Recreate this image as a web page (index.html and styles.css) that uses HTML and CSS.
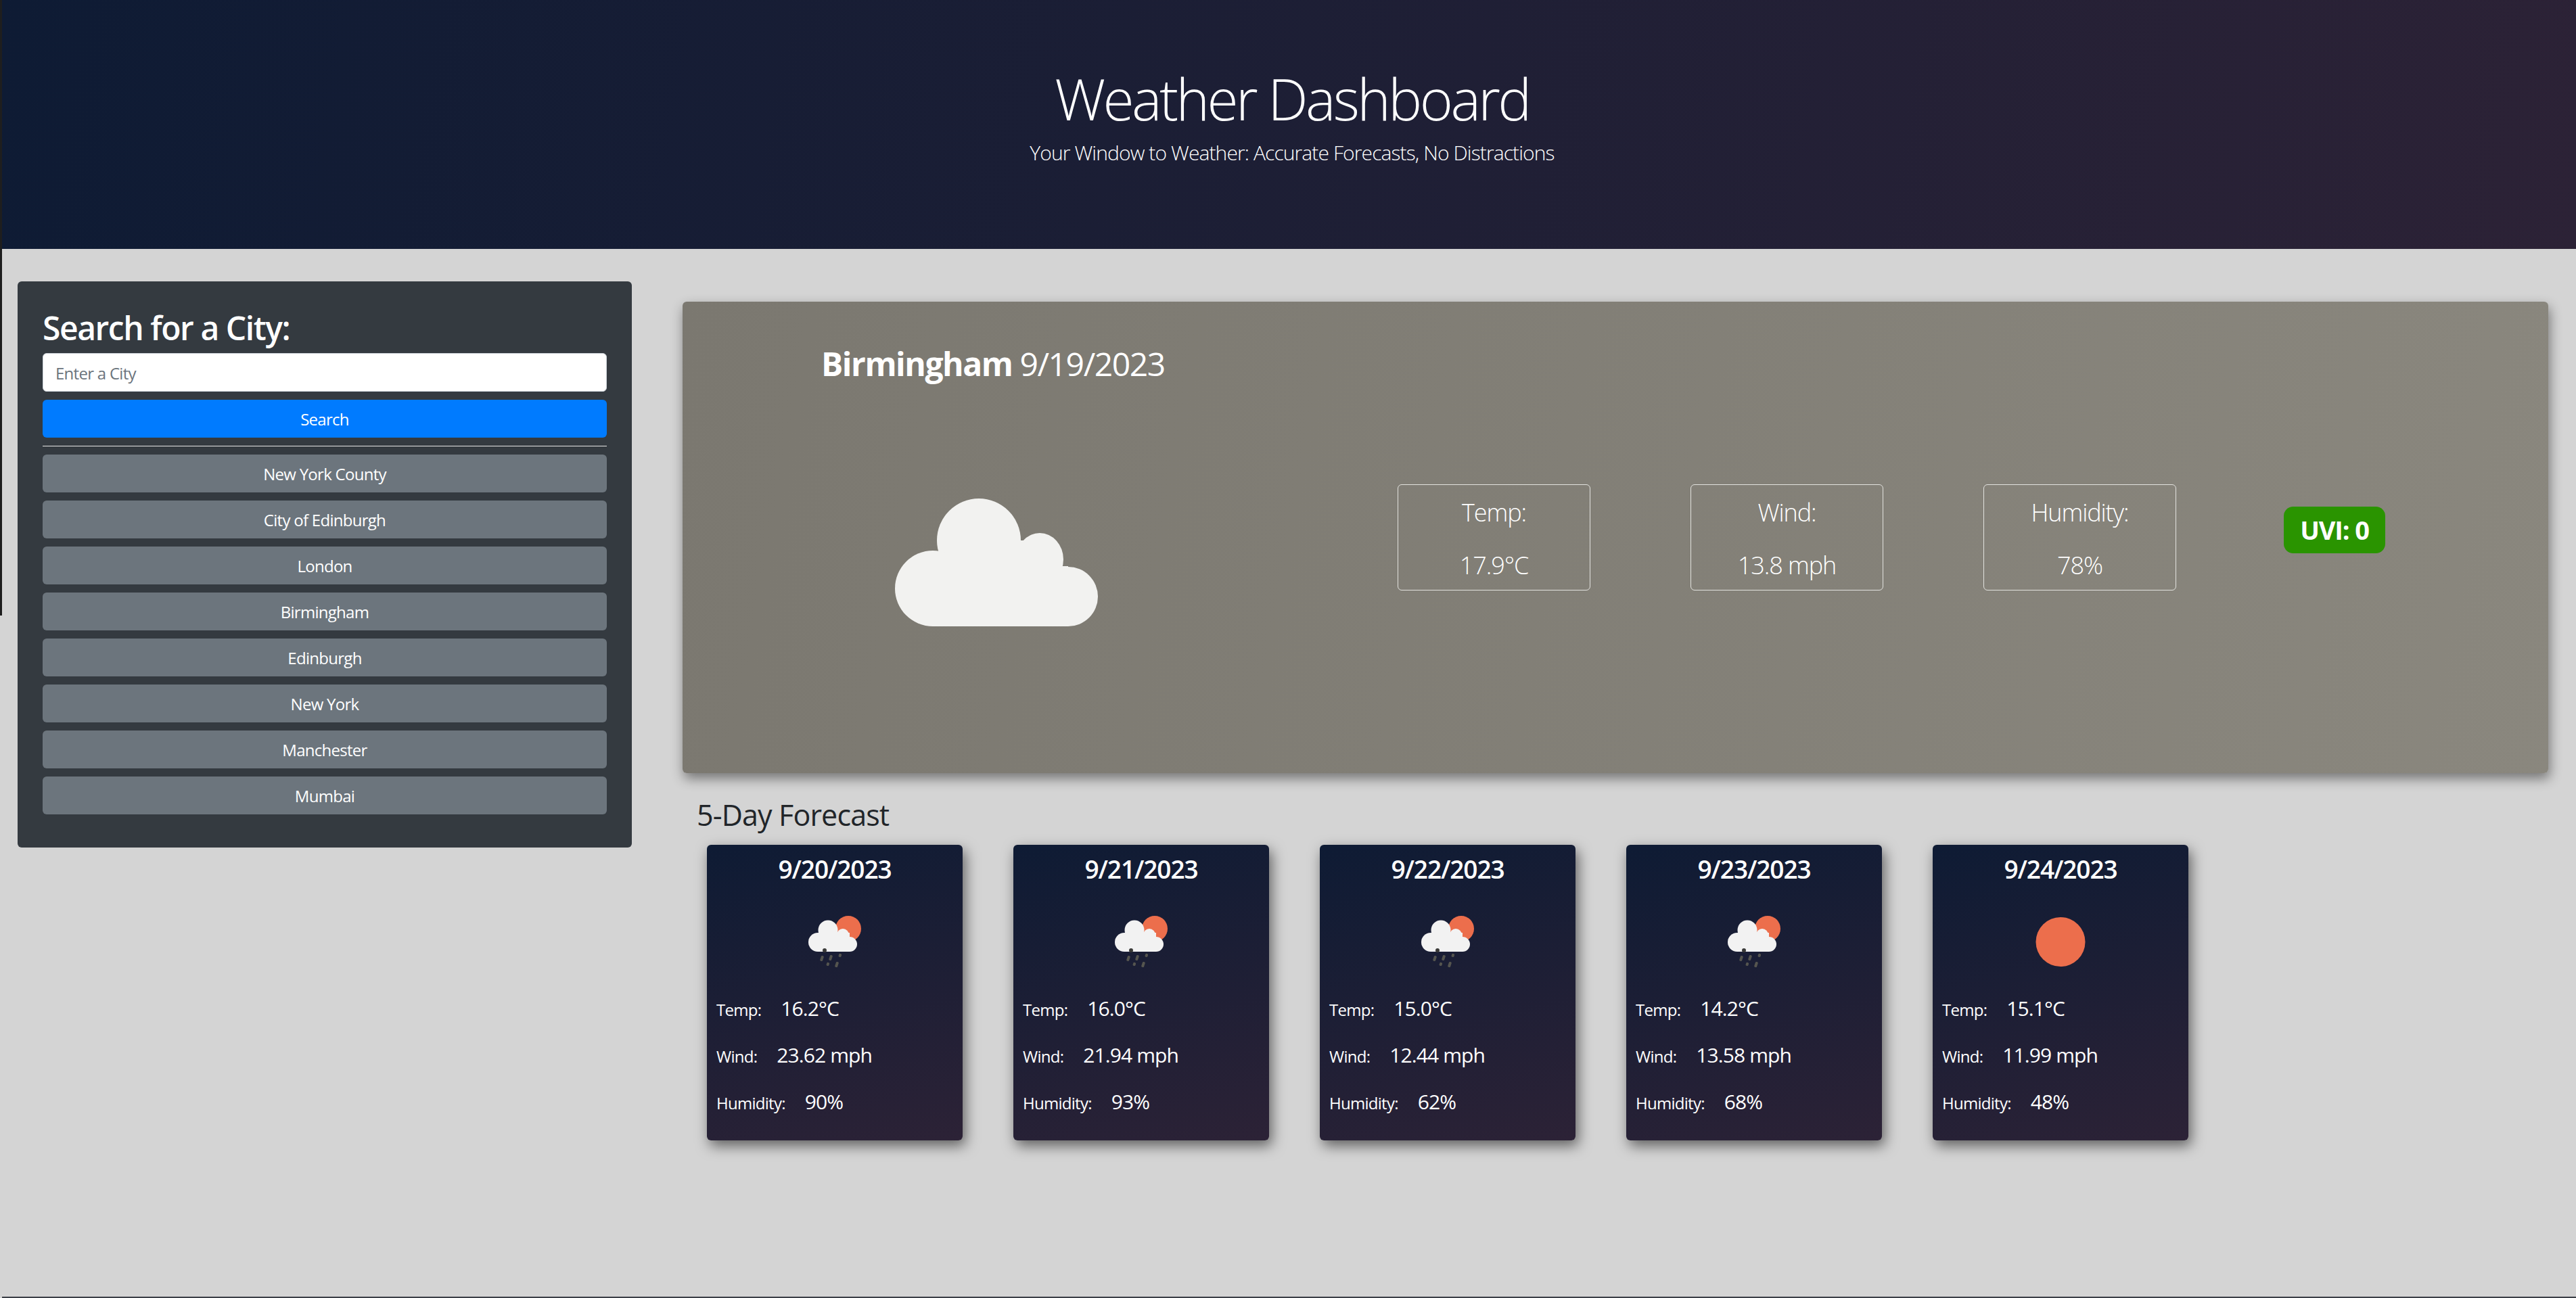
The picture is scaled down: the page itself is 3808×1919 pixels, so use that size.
FILE: index.html
```html
<!DOCTYPE html>
<html lang="en">
<head>
  <meta charset="UTF-8" />
  <title>Weather Dashboard</title>
  <link rel="stylesheet" href="styles.css">
</head>
<body>
  <div class="edge-strip"></div>
  <div class="edge-bottom"></div>

  <header class="page-header">
    <h1>Weather Dashboard</h1>
    <p>Your Window to Weather: Accurate Forecasts, No Distractions</p>
  </header>

  <div class="page-body">
    <aside class="search-panel">
      <h3>Search for a City:</h3>
      <input type="text" class="city-input" placeholder="Enter a City" />
      <button class="btn btn-primary">Search</button>
      <hr />
      <div class="history">
        <button class="btn btn-secondary">New York County</button>
        <button class="btn btn-secondary">City of Edinburgh</button>
        <button class="btn btn-secondary">London</button>
        <button class="btn btn-secondary">Birmingham</button>
        <button class="btn btn-secondary">Edinburgh</button>
        <button class="btn btn-secondary">New York</button>
        <button class="btn btn-secondary">Manchester</button>
        <button class="btn btn-secondary">Mumbai</button>
      </div>
    </aside>

    <main class="results">
      <section class="current">
        <h2><strong>Birmingham</strong> 9/19/2023</h2>
        <div class="current-row">
          <svg class="big-cloud" viewBox="0 0 301 189">
            <g fill="#f2f2f0">
              <circle cx="125" cy="62" r="62" />
              <ellipse cx="215" cy="90" rx="35" ry="39" />
              <circle cx="57" cy="133" r="56" />
              <circle cx="257" cy="145" r="44" />
              <rect x="125" y="62" width="90" height="40" />
              <rect x="57" y="100" width="200" height="89" />
            </g>
          </svg>
          <div class="stats">
            <div class="stat"><span>Temp:</span><span>17.9°C</span></div>
            <div class="stat"><span>Wind:</span><span>13.8 mph</span></div>
            <div class="stat"><span>Humidity:</span><span>78%</span></div>
          </div>
          <div class="uvi">UVI: 0</div>
        </div>
      </section>

      <h4 class="forecast-title">5-Day Forecast</h4>
      <div class="forecast">
        <div class="day-card">
          <h5>9/20/2023</h5>
          <svg class="day-icon" viewBox="0 0 78 76">
            <use href="#rain-icon" />
          </svg>
          <p><span class="label">Temp:</span><span class="value">16.2°C</span></p>
          <p><span class="label">Wind:</span><span class="value">23.62 mph</span></p>
          <p><span class="label">Humidity:</span><span class="value">90%</span></p>
        </div>
        <div class="day-card">
          <h5>9/21/2023</h5>
          <svg class="day-icon" viewBox="0 0 78 76">
            <use href="#rain-icon" />
          </svg>
          <p><span class="label">Temp:</span><span class="value">16.0°C</span></p>
          <p><span class="label">Wind:</span><span class="value">21.94 mph</span></p>
          <p><span class="label">Humidity:</span><span class="value">93%</span></p>
        </div>
        <div class="day-card">
          <h5>9/22/2023</h5>
          <svg class="day-icon" viewBox="0 0 78 76">
            <use href="#rain-icon" />
          </svg>
          <p><span class="label">Temp:</span><span class="value">15.0°C</span></p>
          <p><span class="label">Wind:</span><span class="value">12.44 mph</span></p>
          <p><span class="label">Humidity:</span><span class="value">62%</span></p>
        </div>
        <div class="day-card">
          <h5>9/23/2023</h5>
          <svg class="day-icon" viewBox="0 0 78 76">
            <use href="#rain-icon" />
          </svg>
          <p><span class="label">Temp:</span><span class="value">14.2°C</span></p>
          <p><span class="label">Wind:</span><span class="value">13.58 mph</span></p>
          <p><span class="label">Humidity:</span><span class="value">68%</span></p>
        </div>
        <div class="day-card">
          <h5>9/24/2023</h5>
          <svg class="day-icon" viewBox="0 0 78 76">
            <circle cx="39" cy="38.5" r="36.5" fill="#ec6e4c" />
          </svg>
          <p><span class="label">Temp:</span><span class="value">15.1°C</span></p>
          <p><span class="label">Wind:</span><span class="value">11.99 mph</span></p>
          <p><span class="label">Humidity:</span><span class="value">48%</span></p>
        </div>
      </div>
    </main>
  </div>

  <svg class="icon-defs" width="0" height="0">
    <defs>
      <g id="rain-icon">
        <circle cx="59" cy="19" r="19" fill="#ec6e4c" />
        <g fill="#f2f2f2">
          <circle cx="29" cy="21" r="14.5" />
          <circle cx="51" cy="28" r="9" />
          <circle cx="14" cy="39" r="14" />
          <circle cx="61" cy="42" r="11" />
          <rect x="14" y="25" width="47" height="28" />
        </g>
        <circle cx="24" cy="51" r="3" fill="#3a3a38" />
        <g fill="#55554f">
          <rect x="18" y="59" width="4" height="8" rx="1.5" transform="rotate(18 20 63)" />
          <rect x="31" y="58" width="4" height="8" rx="1.5" transform="rotate(18 33 62)" />
          <rect x="45" y="56" width="4" height="5" rx="1.5" transform="rotate(18 47 58)" />
          <rect x="27" y="69" width="4" height="5" rx="1.5" transform="rotate(18 29 71)" />
          <rect x="40" y="68" width="4" height="8" rx="1.5" transform="rotate(18 42 72)" />
        </g>
      </g>
    </defs>
  </svg>
</body>
</html>
```

FILE: styles.css
```css
* {
  box-sizing: border-box;
  letter-spacing: -0.03em;
}

body {
  font-family: "Open Sans", sans-serif;
  background: #d4d4d4;
  color: #212529;
  margin: 0;
  min-height: 1919px;
}

.edge-strip {
  position: absolute;
  left: 0;
  top: 0;
  width: 3px;
  height: 910px;
  background: #1e1e1e;
}

.edge-bottom {
  position: absolute;
  left: 3px;
  right: 0;
  top: 1917px;
  height: 2px;
  background: #3c3f47;
}

.page-header {
  height: 368px;
  padding: 91px 0 0 12px;
  text-align: center;
  color: #fff;
  background: linear-gradient(100deg, #0e1b34, #2c2236);
}

.page-header h1 {
  font-size: 84px;
  font-weight: 300;
  line-height: 110px;
  letter-spacing: -0.043em;
  margin: 0;
}

.page-header p {
  font-size: 30px;
  font-weight: 300;
  line-height: 42px;
  margin: 4px 0 0;
}

.page-body {
  display: flex;
  align-items: flex-start;
  padding: 48px 41px 0 26px;
}

.search-panel {
  width: 908px;
  height: 837px;
  flex-shrink: 0;
  padding: 32px 37px 0;
  background: #343a40;
  border-radius: 6px;
  color: #fff;
}

.search-panel h3 {
  font-size: 48px;
  font-weight: 600;
  line-height: 74px;
  margin: 0;
}

.city-input {
  display: block;
  width: 100%;
  height: 57px;
  padding: 2px 18px 0;
  border: 1px solid #ced4da;
  border-radius: 6px;
  font-family: inherit;
  font-size: 24px;
}

.city-input::placeholder {
  color: #6c757d;
}

.btn {
  display: block;
  width: 100%;
  height: 56px;
  border: none;
  border-radius: 6px;
  color: #fff;
  font-family: inherit;
  font-size: 24px;
}

.btn-primary {
  background: #007bff;
  margin-top: 12px;
}

.btn-secondary {
  background: #6c757d;
}

.search-panel hr {
  border: none;
  border-top: 1px solid #e6e6e6;
  margin: 12px 0;
}

.history {
  display: flex;
  flex-direction: column;
  gap: 12px;
}

.results {
  flex: 1;
  margin-left: 75px;
}

.current {
  height: 697px;
  margin-top: 30px;
  padding: 60px 0 0 205px;
  color: #fff;
  background: linear-gradient(100deg, #7b7870, #8a877e);
  border-radius: 6px;
  box-shadow: 2px 8px 18px rgba(0, 0, 0, 0.45);
}

.current h2 {
  font-size: 48px;
  font-weight: 400;
  line-height: 64px;
  margin: 0;
}

.current-row {
  display: flex;
  align-items: flex-start;
  margin-top: 146px;
}

.big-cloud {
  width: 301px;
  height: 189px;
  margin: 21px 0 0 108px;
  flex-shrink: 0;
}

.stats {
  display: flex;
  gap: 148px;
  margin-left: 443px;
}

.stat {
  width: 285px;
  height: 157px;
  display: flex;
  flex-direction: column;
  justify-content: space-between;
  align-items: center;
  padding: 17px 0 12px;
  border: 1px solid #e2e2de;
  border-radius: 6px;
  font-size: 36px;
  font-weight: 300;
  line-height: 48px;
}

.uvi {
  width: 150px;
  height: 69px;
  margin: 33px 0 0 159px;
  background: #2a9400;
  border-radius: 14px;
  text-align: center;
  font-size: 38px;
  font-weight: 700;
  line-height: 69px;
}

.forecast-title {
  font-size: 43px;
  font-weight: 400;
  line-height: 56px;
  letter-spacing: -0.02em;
  margin: 34px 0 0 21px;
}

.forecast {
  display: flex;
  gap: 75px;
  margin: 16px 0 0 36px;
}

.day-card {
  width: 378px;
  height: 437px;
  padding: 14px 14px 0;
  color: #fff;
  background: linear-gradient(165deg, #0e1b34, #2c2236);
  border-radius: 6px;
  box-shadow: 4px 8px 20px rgba(0, 0, 0, 0.55);
}

.day-card h5 {
  font-size: 37px;
  font-weight: 600;
  line-height: 44px;
  text-align: center;
  margin: 0;
}

.day-icon {
  display: block;
  width: 78px;
  height: 76px;
  margin: 47px auto 0;
}

.day-card p {
  display: flex;
  align-items: baseline;
  height: 69px;
  line-height: 69px;
  margin: 0;
}

.day-card p:first-of-type {
  margin-top: 26px;
}

.label {
  font-size: 24px;
  margin-right: 29px;
}

.value {
  font-size: 30px;
}

.icon-defs {
  position: absolute;
}
```
